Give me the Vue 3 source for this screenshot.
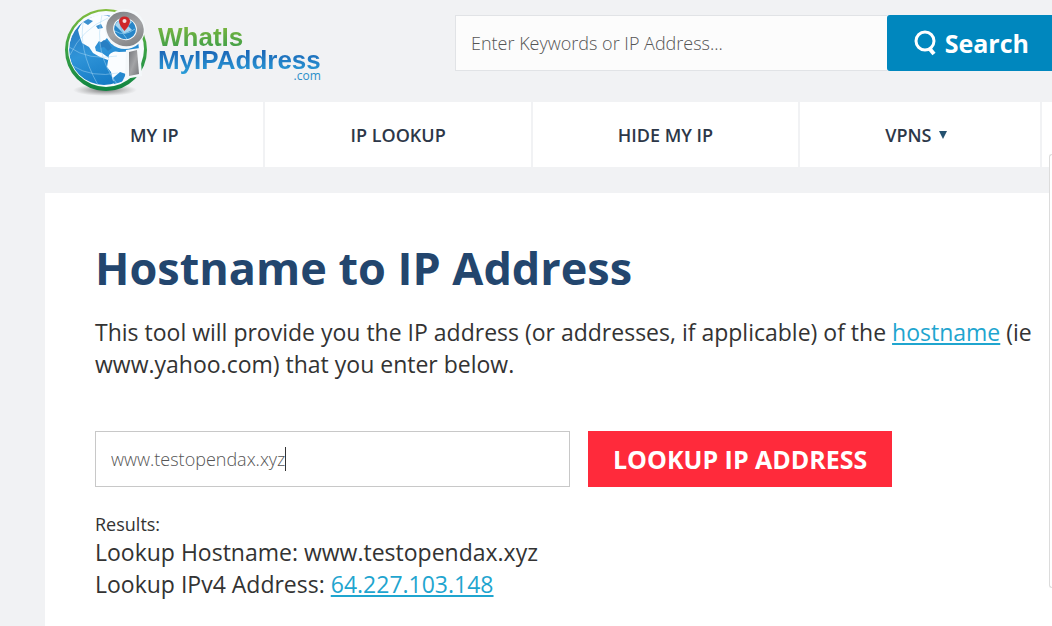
<script setup>
import { ref } from 'vue';

const keywords = ref('');
const hostname = ref('www.testopendax.xyz');
const result = ref({
    hostname: 'www.testopendax.xyz',
    ipv4: '64.227.103.148',
});

const menu = [
    { label: 'MY IP', href: '/my-ip' },
    { label: 'IP LOOKUP', href: '/ip-lookup' },
    { label: 'HIDE MY IP', href: '/hide-ip' },
    { label: 'VPNS', href: '/vpns', dropdown: true },
];

const lookup = () => {
    result.value.hostname = hostname.value;
};
</script>

<template>
    <div class="page">
        <header class="site-header">
            <a href="/" class="brand">
                <svg class="brand-mark" viewBox="0 0 95 100" aria-hidden="true">
                    <defs>
                        <linearGradient id="ring" x1="0" y1="0" x2="0" y2="1">
                            <stop offset="0" stop-color="#84bd3d" />
                            <stop offset="0.45" stop-color="#3fa546" />
                            <stop offset="1" stop-color="#0f8442" />
                        </linearGradient>
                        <linearGradient id="ocean" x1="0.2" y1="0" x2="0.6" y2="1">
                            <stop offset="0" stop-color="#2775bd" />
                            <stop offset="0.5" stop-color="#2f94d8" />
                            <stop offset="1" stop-color="#1479c4" />
                        </linearGradient>
                        <linearGradient id="metal" x1="0" y1="0" x2="1" y2="1">
                            <stop offset="0" stop-color="#777a7e" />
                            <stop offset="0.5" stop-color="#a3a4a6" />
                            <stop offset="1" stop-color="#77787b" />
                        </linearGradient>
                        <radialGradient id="shade">
                            <stop offset="0" stop-color="#555" stop-opacity="0.8" />
                            <stop offset="1" stop-color="#777" stop-opacity="0" />
                        </radialGradient>
                        <clipPath id="globe"><circle cx="45" cy="50" r="36" /></clipPath>
                    </defs>
                    <ellipse cx="45" cy="90" rx="32" ry="6" fill="url(#shade)" />
                    <circle cx="46" cy="50" r="41" fill="url(#ring)" />
                    <circle cx="46" cy="49" r="38" fill="#f7fbff" />
                    <g clip-path="url(#globe)">
                        <circle cx="44" cy="50" r="35" fill="url(#ocean)" />
                        <path d="M18 30 Q22 20 32 17 Q42 12 52 18 L52 27 L54 38 L50 41 L47 38 L42 43 L39 41 L35 47 L36 51 L42 53 L49 58 L48 60 L40 57 L33 53 L29 47 L22 43 L19 34Z" fill="#fafdff" />
                        <path d="M23 22 L28 19 L33 21 L28 25Z M36 26 L41 24 L43 28 L38 29Z" fill="#3d91cf" />
                        <path d="M49 55 Q53 50 59 52 L80 51 L80 70 L68 76 L60 82 L53 81 L51 72 L47 67Z" fill="#fafdff" />
                        <path d="M53 78 L60 72 L66 74 L62 82 L54 84Z" fill="#2589cf" />
                        <path d="M40 43 L44 40 L48 42 L52 48 L48 51 L44 47 L40 48Z" fill="#287fc3" />
                        <path d="M9 47 Q29 61 57 56 M13 66 Q32 78 58 73 M24 18 Q17 48 38 85 M42 15 Q33 52 57 84 M10 55 Q22 29 48 18" fill="none" stroke="#a9d9f4" stroke-width="0.7" opacity="0.7" />
                    </g>
                    <circle cx="65" cy="29" r="20" fill="#f4f8fa" />
                    <path d="M66 50 L80 48 L82 76 L65 79Z" fill="#f4f8fa" />
                    <ellipse cx="65" cy="29" rx="19" ry="17" transform="rotate(20 65 29)" fill="url(#metal)" />
                    <ellipse cx="65" cy="29" rx="12" ry="11" transform="rotate(20 65 29)" fill="#f5fafc" />
                    <ellipse cx="65" cy="29" rx="11" ry="10" transform="rotate(20 65 29)" fill="#2786c8" />
                    <path d="M55 25 Q58 19 66 19 L72 22 L68 26 L72 30 L64 34 L59 29Z" fill="#a9d5ee" />
                    <path d="M55 31 Q64 37 75 29 M61 20 Q59 30 67 39" fill="none" stroke="#78bde5" stroke-width="1" />
                    <path d="M69 52 L77 50 L79 74 L69 76Z" fill="url(#metal)" />
                    <path d="M64.500 31 Q59 25 59 21 A5.500 4.500 0 0 1 70 21 Q70 25 64.500 31Z" fill="#cf2528" />
                    <circle cx="64.500" cy="21" r="2" fill="#f5dddd" />
                </svg>
                <span class="brand-name">
                    <span class="brand-top">WhatIs</span>
                    <span class="brand-bottom">MyIPAddress</span>
                    <span class="brand-suffix">.com</span>
                </span>
            </a>

            <form class="search" @submit.prevent>
                <input v-model="keywords" class="search-input" type="text" aria-label="Search" placeholder="Enter Keywords or IP Address...">
                <button class="search-button" type="submit">
                    <svg class="search-icon" viewBox="0 0 24 26" aria-hidden="true">
                        <circle cx="12" cy="11" r="9" fill="none" stroke="currentColor" stroke-width="3" />
                        <path d="M16 18 L21 24" stroke="currentColor" stroke-width="4" />
                    </svg>
                    Search
                </button>
            </form>
        </header>

        <nav class="menu">
            <a v-for="item in menu" :key="item.label" :href="item.href" class="menu-item" :class="{ 'has-dropdown': item.dropdown }">
                {{ item.label }}
                <span v-if="item.dropdown" class="menu-arrow"></span>
            </a>
            <span class="menu-rest"></span>
        </nav>

        <main class="content">
            <h1>Hostname to IP Address</h1>
            <p class="intro">
                This tool will provide you the IP address (or addresses, if applicable) of the
                <a href="/hostname">hostname</a> (ie www.yahoo.com) that you enter below.
            </p>

            <form class="lookup" @submit.prevent="lookup">
                <label class="lookup-field">
                    <input v-model="hostname" class="lookup-input" type="text" aria-label="Hostname" spellcheck="false">
                    <span class="caret"></span>
                </label>
                <button class="lookup-button" type="submit">LOOKUP IP ADDRESS</button>
            </form>

            <section class="results">
                <div class="results-title">Results:</div>
                <div>Lookup Hostname: {{ result.hostname }}</div>
                <div>Lookup IPv4 Address: <a :href="`/ip/${result.ipv4}`">{{ result.ipv4 }}</a></div>
            </section>
        </main>

        <aside class="side-panel"></aside>
    </div>
</template>

<style>
body {
    margin: 0;
    background: #f1f2f4;
}
</style>

<style scoped>
.page {
    position: relative;
    box-sizing: border-box;
    min-height: 100vh;
    padding-left: 45px;
    display: flex;
    flex-direction: column;
    overflow: hidden;
    color: #333;
    font-family: 'Open Sans', sans-serif;
}

a {
    color: #1fa5cf;
}

.site-header {
    display: flex;
    justify-content: space-between;
    height: 102px;
}

.brand {
    display: flex;
    flex: 0 0 410px;
    box-sizing: border-box;
    padding-left: 15px;
    text-decoration: none;
}

.brand-mark {
    width: 95px;
    height: 100px;
}

.brand-name {
    display: flex;
    flex-direction: column;
    padding: 26px 0 0 3px;
    font-family: 'Liberation Sans', Arial, sans-serif;
    font-size: 26px;
    font-weight: 700;
    line-height: 23px;
}

.brand-top,
.brand-bottom {
    color: transparent;
    background-clip: text;
}

.brand-top {
    background-image: linear-gradient(#7bb63e, #3d9e49);
}

.brand-bottom {
    padding-bottom: 5px;
    background-image: linear-gradient(#1b62b4, #2ba5dd);
}

.brand-suffix {
    align-self: flex-end;
    margin-top: -8px;
    color: #2b8fc9;
    font-family: 'Open Sans', sans-serif;
    font-size: 12px;
    font-weight: 400;
    line-height: 14px;
}

.search {
    display: flex;
    flex: 1;
    min-width: 0;
    height: 56px;
    padding-top: 15px;
}

.search-input {
    flex: 1;
    min-width: 0;
    box-sizing: border-box;
    padding: 0 15px;
    border: 1px solid #e1e3e6;
    border-right: 0;
    border-radius: 0;
    background: #fcfcfc;
    color: #555;
    font: 300 18px 'Open Sans', sans-serif;
    outline: none;
}

.search-input::placeholder {
    color: #555;
    opacity: 1;
}

.search-button {
    display: flex;
    align-items: center;
    gap: 8px;
    padding: 0 23px 0 26px;
    border: 0;
    border-radius: 3px 0 0 3px;
    background: #0087be;
    color: #fff;
    font: 700 25px 'Open Sans', sans-serif;
    cursor: pointer;
}

.search-icon {
    width: 24px;
    height: 26px;
}

.menu {
    display: flex;
    gap: 2px;
    height: 65px;
}

.menu-item {
    display: flex;
    align-items: center;
    gap: 8px;
    padding: 0 85px;
    background: #fff;
    color: #2d3748;
    font-size: 18px;
    font-weight: 600;
    text-decoration: none;
    white-space: nowrap;
}

.has-dropdown {
    padding-right: 93px;
}

.menu-arrow {
    border: 4px solid transparent;
    border-top: 8px solid #24516f;
    border-bottom: 0;
}

.menu-rest {
    flex: 1;
    background: #fff;
}

.content {
    flex: 1;
    margin-top: 26px;
    padding: 42px 16px 24px 50px;
    background: #fff;
}

h1 {
    margin: 0;
    color: #23466e;
    font-size: 45px;
    font-weight: 700;
    line-height: 66px;
}

.intro {
    margin: 15px 0 0;
    font-size: 23px;
    line-height: 32px;
}

.lookup {
    display: flex;
    gap: 18px;
    margin-top: 51px;
}

.lookup-field {
    display: flex;
    flex: 0 1 475px;
    align-items: center;
    box-sizing: border-box;
    height: 56px;
    padding: 0 15px;
    border: 1px solid #c8c8c8;
    cursor: text;
}

.lookup-input {
    field-sizing: content;
    padding: 0;
    border: 0;
    background: transparent;
    color: #555;
    font: 300 18px 'Open Sans', sans-serif;
    outline: none;
}

.caret {
    width: 1px;
    height: 24px;
    background: #333;
}

.lookup-button {
    padding: 0 25px;
    border: 0;
    background: #ff2a3b;
    color: #fff;
    font: 700 25px 'Open Sans', sans-serif;
    white-space: nowrap;
    cursor: pointer;
}

.results {
    margin-top: 25px;
    font-size: 23px;
    line-height: 32px;
}

.results-title {
    font-size: 18px;
    line-height: 24px;
}

.side-panel {
    position: absolute;
    top: 154px;
    right: 0;
    box-sizing: border-box;
    width: 3px;
    height: 434px;
    border: 1px solid #dcdcdc;
    border-right: 0;
    border-radius: 6px 0 0 6px;
    background: #fff;
}
</style>
